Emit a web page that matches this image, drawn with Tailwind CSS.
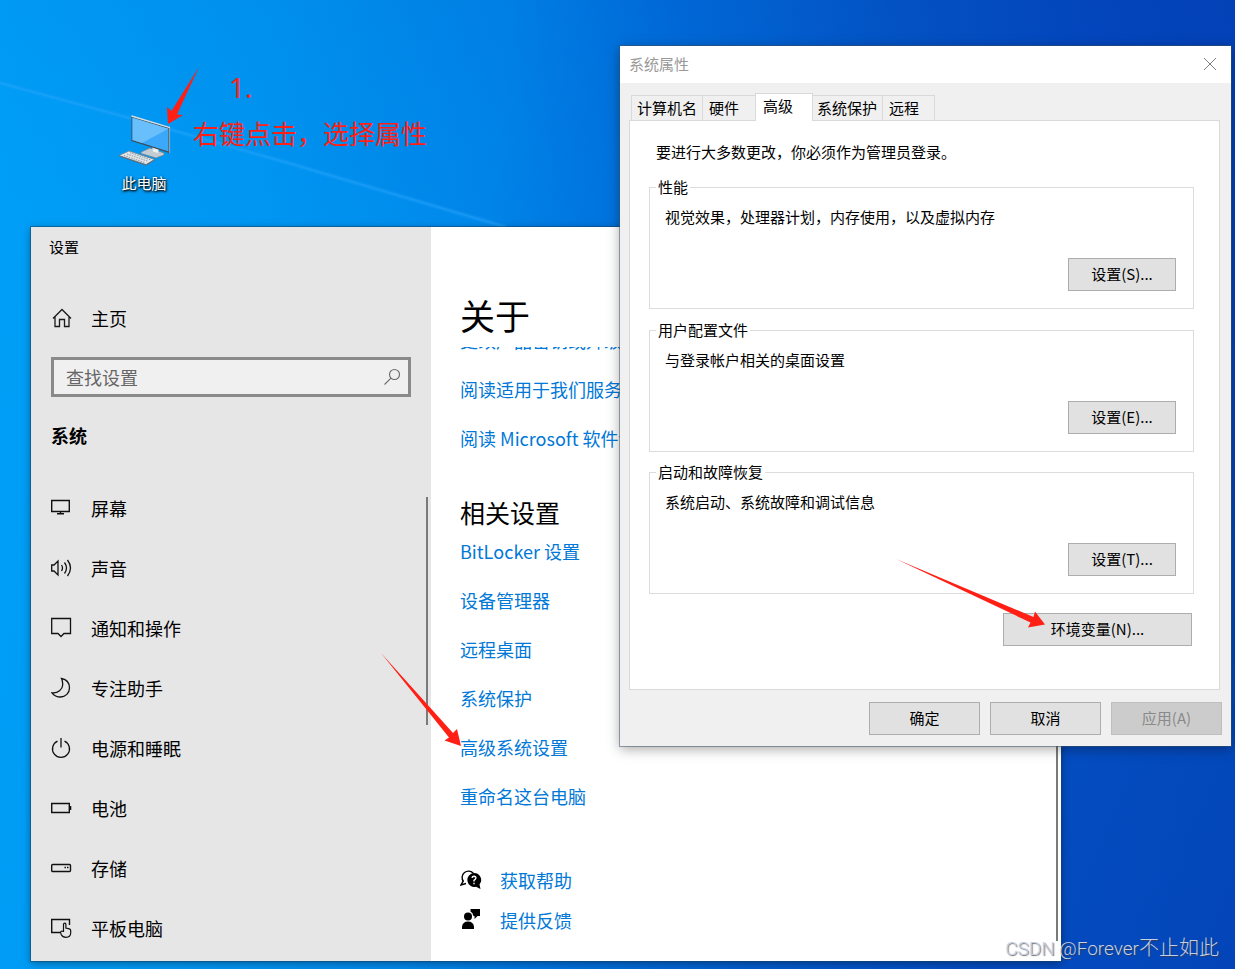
<!DOCTYPE html>
<html lang="zh-CN">
<head>
<meta charset="utf-8">
<meta name="viewport" content="width=device-width, initial-scale=1">
<title>系统属性</title>
<script src="https://cdn.jsdelivr.net/npm/@tailwindcss/browser@4"></script>
</head>
<body class="font-['Noto_Sans_CJK_SC',sans-serif] text-black">
<div class="relative h-screen min-h-[969px] overflow-hidden bg-[linear-gradient(97deg,#00a0f7_0%,#0098f2_20%,#0088ea_38%,#0070dc_50%,#0458c8_66%,#044ac0_80%,#0341b6_100%)]">

  <!-- wallpaper light -->
  <div class="absolute inset-0 bg-[linear-gradient(200deg,rgba(0,50,170,0.22)_0%,rgba(0,80,200,0.10)_28%,rgba(0,150,240,0.08)_48%,rgba(0,170,255,0)_100%)]"></div>
  <svg class="absolute left-0 top-0" width="620" height="240" viewBox="0 0 620 240" aria-hidden="true">
    <path d="M0 83 L126 117 L285 162 L506 227 L550 240 L0 240 Z" fill="#00a2ff" fill-opacity=".14"/>
    <path d="M0 83 L126 117 L285 162 L506 227" fill="none" stroke="#25a4ff" stroke-width="5" stroke-opacity=".22"/>
    <path d="M0 83 L126 117 L285 162 L506 227" fill="none" stroke="#35adff" stroke-width="2" stroke-opacity=".3"/>
  </svg>

  <!-- desktop shortcut -->
  <a href="#" class="absolute left-[112px] top-[114px] flex w-16 flex-col items-center gap-[5px]">
    <svg width="54" height="54" viewBox="0 0 54 54" aria-hidden="true">
      <path d="M24 38 L33 34 L47 39 L47 41 L39 44 L24 39.500 Z" fill="#c3ccd2" stroke="#6d7c86" stroke-width=".7"/>
      <path d="M35 32 L42 34 L41 39 L36 37.500Z" fill="#eef2f4"/>
      <path d="M14.500 2 L53 13.700 L53 39.200 L14.500 27 Z" fill="#3f4b54"/>
      <path d="M14.500 2 L53 13.700" stroke="#d8dfe3" stroke-width="1.400"/>
      <path d="M52.600 14 V39" stroke="#b4bfc6" stroke-width=".8"/>
      <path d="M15.500 3.800 L51.500 14.700 L51.500 37.500 L15.500 26 Z" fill="#3ba8fa"/>
      <path d="M15.500 3.800 L51.500 14.700 L25 29 L15.500 26 Z" fill="#68bffc"/>
      <path d="M2 41.500 L12 37 L37.500 45.500 L29 50.500 Z" fill="#e3e7ea" stroke="#76838c" stroke-width=".8"/>
      <path d="M2 42 L29 51.200 L37.500 46" fill="none" stroke="#5f6c75" stroke-width="1"/>
      <path d="M7 41.500 L28 48.700 M10 40 L31 47.300 M13 38.800 L34 46" stroke="#8f9aa2" stroke-width="1" stroke-dasharray="1.500 1"/>
    </svg>
    <span class="text-[15px] leading-5 text-white [text-shadow:1px_1px_2px_#000,0_1px_3px_rgba(0,0,0,0.8)]">此电脑</span>
  </a>

  <!-- note -->
  <div class="absolute left-[193px] top-[67px] text-[#ff1f14]">
    <p class="pl-9 font-['Noto_Sans',sans-serif] text-[28px] leading-10">1.</p>
    <p class="mt-[6px] text-[26px] leading-10">右键点击，选择属性</p>
  </div>

  <!-- settings window -->
  <section class="absolute bottom-2 left-[31px] right-[174px] top-[227px] flex bg-white shadow-[0_0_0_1px_rgba(20,70,110,0.55),0_2px_8px_rgba(0,0,0,0.4)]" aria-label="设置">
    <aside class="flex w-[400px] shrink-0 flex-col overflow-hidden bg-[#e6e6e6]">
      <h2 class="pl-[18px] text-[15px] leading-10">设置</h2>
      <button class="mt-[31px] flex h-10 shrink-0 items-center gap-[18px] pl-5 text-left text-[18px]">
        <svg width="22" height="22" viewBox="0 0 22 22" fill="none" stroke="#1a1a1a" stroke-width="1.300"><path d="M2 11.500 L11 2.500 L20 11.500 M4 10 V19.500 H8.500 V12.500 H13.500 V19.500 H18 V10"/></svg>
        主页
      </button>
      <label class="mx-5 mt-[19px] flex h-10 shrink-0 items-center border-3 border-[#8a8a8a] bg-[#f0f0f0] pl-3 pr-[7px]">
        <input type="text" placeholder="查找设置" aria-label="查找设置" class="min-w-0 flex-1 bg-transparent text-[18px] leading-6 outline-none placeholder:text-[#666]">
        <svg width="18" height="18" viewBox="0 0 18 18" fill="none" stroke="#6a6a6a" stroke-width="1.100"><circle cx="11.500" cy="6.500" r="5"/><path d="M8 10.200 L1.500 16.500"/></svg>
      </label>
      <h3 class="mt-[18px] shrink-0 pl-5 text-[18px] font-bold leading-10">系统</h3>
      <nav class="relative mt-[23px] flex flex-1 flex-col overflow-hidden text-[18px]">
        <a href="#" class="flex h-15 shrink-0 items-center gap-[18px] pl-5"><svg width="22" height="22" viewBox="0 0 22 22" fill="none" stroke="#111" stroke-width="1.400" class="shrink-0"><path d="M.7 3.500 H18.300 V14.500 H.7 Z M9.500 14.500 V16.800 M6 16.800 H13"/></svg>屏幕</a>
        <a href="#" class="flex h-15 shrink-0 items-center gap-[18px] pl-5"><svg width="22" height="22" viewBox="0 0 22 22" fill="none" stroke="#111" stroke-width="1.300" class="shrink-0"><path d="M.7 8 H3 L7 4 V18 L3 14 H.7 Z M10.500 8 Q12.500 11 10.500 14 M13.500 5.500 Q17.500 11 13.500 16.500 M16.500 3 Q22.500 11 16.500 19"/></svg>声音</a>
        <a href="#" class="flex h-15 shrink-0 items-center gap-[18px] pl-5"><svg width="22" height="22" viewBox="0 0 22 22" fill="none" stroke="#111" stroke-width="1.300" class="shrink-0"><path d="M.7 1.500 H19.500 V16.500 H13 L10 19.500 L7 16.500 H.7 Z"/></svg>通知和操作</a>
        <a href="#" class="flex h-15 shrink-0 items-center gap-[18px] pl-5"><svg width="22" height="22" viewBox="0 0 22 22" fill="none" stroke="#111" stroke-width="1.300" class="shrink-0"><path d="M10.500 1.500 C16 2.500 18.500 6.500 18.500 11 C18.500 16 14.500 20 9.500 20 C6 20 3 18.500 1 15.800 C7 16.500 11.500 12.500 11.700 8 C11.800 5.500 11.500 3.500 10.500 1.500 Z"/></svg>专注助手</a>
        <a href="#" class="flex h-15 shrink-0 items-center gap-[18px] pl-5"><svg width="22" height="22" viewBox="0 0 22 22" fill="none" stroke="#111" stroke-width="1.300" class="shrink-0"><path d="M10 1 V10.500 M6.500 4.200 A8.500 8.500 0 1 0 13.500 4.200"/></svg>电源和睡眠</a>
        <a href="#" class="flex h-15 shrink-0 items-center gap-[18px] pl-5"><svg width="22" height="22" viewBox="0 0 22 22" fill="none" stroke="#111" stroke-width="1.400" class="shrink-0"><path d="M.7 6.500 H18.300 V15.500 H.7 Z"/><path d="M19.500 9 V13" stroke-width="1.600"/></svg>电池</a>
        <a href="#" class="flex h-15 shrink-0 items-center gap-[18px] pl-5"><svg width="22" height="22" viewBox="0 0 22 22" fill="none" stroke="#111" stroke-width="1.400" class="shrink-0"><rect x=".7" y="7.500" width="18.800" height="7" rx="1"/><path d="M13.500 10.500 H15 M16 10.500 H17.500"/></svg>存储</a>
        <a href="#" class="flex h-15 shrink-0 items-center gap-[18px] pl-5"><svg width="22" height="22" viewBox="0 0 22 22" fill="none" stroke="#111" stroke-width="1.400" class="shrink-0"><path d="M9 15.500 H.7 V2.500 H18.500 V8"/><path stroke-width="1.200" d="M12.500 15 V7.500 Q12.500 6.200 13.700 6.200 Q14.900 6.200 14.900 7.500 V11 L18.300 11.800 Q19.700 12.200 19.700 13.500 V16 Q19.500 20.300 15 20.300 Q11.500 20.300 10.300 17.800 L9.500 15.500 Q9.500 13.500 12.500 14.500"/></svg>平板电脑</a>
        <span class="absolute right-[3px] top-[19px] h-[228px] w-[2px] bg-[#7a7a7a]"></span>
      </nav>
    </aside>
    <main class="relative flex min-w-0 flex-1 flex-col pl-[29px] pt-[67px]">
      <h1 class="shrink-0 text-[35px] leading-[42px]">关于</h1>
      <div class="mt-[11px] flex-1 overflow-hidden whitespace-nowrap text-[18px] text-[#0078d7]">
        <div class="-mt-[31px] flex flex-col items-start">
          <a href="#" class="leading-[49px]">更改产品密钥或升级</a>
          <a href="#" class="leading-[49px]">阅读适用于我们服务</a>
          <a href="#" class="leading-[49px]">阅读 Microsoft 软件许</a>
          <h2 class="mt-[35px] text-[25px] leading-[29px] text-black">相关设置</h2>
          <a href="#" class="leading-[49px]">BitLocker 设置</a>
          <a href="#" class="leading-[49px]">设备管理器</a>
          <a href="#" class="leading-[49px]">远程桌面</a>
          <a href="#" class="leading-[49px]">系统保护</a>
          <a href="#" class="leading-[49px]">高级系统设置</a>
          <a href="#" class="leading-[49px]">重命名这台电脑</a>
          <a href="#" class="mt-[39px] flex h-10 items-center gap-[18px]">
            <svg width="22" height="22" viewBox="0 0 22 22" aria-hidden="true"><path d="M3.500 12.500 A6.200 6.200 0 1 1 13.500 4.500" fill="none" stroke="#000" stroke-width="1.400"/><path d="M3.300 11.800 L1 16 L6 14.500" fill="none" stroke="#000" stroke-width="1.400"/><path d="M14 4 A7 7 0 0 1 19.500 15.500 L20.500 20 L16 17.800 A7 7 0 1 1 14 4 Z" fill="#000"/><path d="M12 9 Q12.200 7.200 14 7.200 Q16 7.300 15.900 9 Q15.800 10.200 14 11.300 V12.500 M14 13.800 V15.300" fill="none" stroke="#fff" stroke-width="1.400"/></svg>
            获取帮助</a>
          <a href="#" class="flex h-10 items-center gap-[18px]">
            <svg width="22" height="22" viewBox="0 0 22 22" aria-hidden="true"><path d="M10.500 0 H20 V7 H17.500 L14.500 10 V7 L13.200 6.800 A5 5 0 0 0 10.500 2.500 Z" fill="#000"/><circle cx="8" cy="7.500" r="4" fill="#000"/><path d="M2 20 V18 Q2.500 12.500 8 12.500 Q13.500 12.500 14 18 V20 Z" fill="#000"/></svg>
            提供反馈</a>
        </div>
      </div>
      <span class="absolute bottom-5 right-[3px] top-[120px] w-[2px] bg-[#7a7a7a]"></span>
    </main>
  </section>

  <!-- system properties dialog -->
  <section class="absolute right-1 top-[46px] flex w-[611px] flex-col bg-[#f0f0f0] text-[15px] leading-[22px] shadow-[0_0_0_1px_rgba(60,80,100,0.5),0_3px_12px_rgba(0,0,0,0.35)]" role="dialog" aria-label="系统属性">
    <header class="flex h-[37px] items-center justify-between bg-white pb-[2px] pl-[9px] pr-[14px] text-[#999]">
      <h2>系统属性</h2>
      <button aria-label="关闭"><svg width="14" height="14" viewBox="0 0 14 14" stroke="#808080" stroke-width="1"><path d="M1 1 L13 13 M13 1 L1 13"/></svg></button>
    </header>
    <div class="pl-[9px] pr-[11px] pt-[10px]">
      <div class="flex items-end pl-[2px]" role="tablist">
        <button role="tab" class="h-[25px] w-[71px] whitespace-nowrap border-l border-t border-[#d9d9d9] pl-[5px] text-left">计算机名</button>
        <button role="tab" class="h-[25px] w-[53px] border-l border-t border-[#d9d9d9] pl-[6px] text-left">硬件</button>
        <button role="tab" aria-selected="true" class="relative -mb-px h-[28px] w-[58px] border-x border-t border-[#d9d9d9] bg-white pb-1 pl-[7px] text-left">高级</button>
        <button role="tab" class="h-[25px] w-[69px] whitespace-nowrap border-t border-[#d9d9d9] pl-[4px] text-left">系统保护</button>
        <button role="tab" class="h-[25px] w-[53px] border-x border-t border-[#d9d9d9] pl-[6px] text-left">远程</button>
      </div>
      <div class="flex flex-col border border-[#d9d9d9] bg-white pb-[43px] pl-[19px] pr-[25px] pt-5">
        <p class="pl-[7px]">要进行大多数更改，你必须作为管理员登录。</p>
        <fieldset class="mt-[13px] border border-[#dcdcdc] pb-[17px] pl-[6px] pr-[17px]">
          <legend class="px-[2px]">性能</legend>
          <p class="pl-[9px] pt-2">视觉效果，处理器计划，内存使用，以及虚拟内存</p>
          <div class="mt-[30px] flex justify-end"><button class="h-[33px] w-[108px] border border-[#adadad] bg-[#e1e1e1] pb-[2px]">设置(S)...</button></div>
        </fieldset>
        <fieldset class="mt-[10px] border border-[#dcdcdc] pb-[17px] pl-[6px] pr-[17px]">
          <legend class="px-[2px]">用户配置文件</legend>
          <p class="pl-[9px] pt-2">与登录帐户相关的桌面设置</p>
          <div class="mt-[30px] flex justify-end"><button class="h-[33px] w-[108px] border border-[#adadad] bg-[#e1e1e1] pb-[2px]">设置(E)...</button></div>
        </fieldset>
        <fieldset class="mt-[9px] border border-[#dcdcdc] pb-[17px] pl-[6px] pr-[17px]">
          <legend class="px-[2px]">启动和故障恢复</legend>
          <p class="pl-[9px] pt-2">系统启动、系统故障和调试信息</p>
          <div class="mt-[30px] flex justify-end"><button class="h-[33px] w-[108px] border border-[#adadad] bg-[#e1e1e1] pb-[2px]">设置(T)...</button></div>
        </fieldset>
        <button class="mr-[2px] mt-[19px] h-[33px] w-[189px] self-end border border-[#adadad] bg-[#e1e1e1] pb-[2px]">环境变量(N)...</button>
      </div>
    </div>
    <footer class="flex justify-end gap-[10px] pb-[11px] pr-[9px] pt-3">
      <button class="h-[33px] w-[111px] border border-[#adadad] bg-[#e1e1e1] pb-[2px]">确定</button>
      <button class="h-[33px] w-[111px] border border-[#adadad] bg-[#e1e1e1] pb-[2px]">取消</button>
      <button disabled class="h-[33px] w-[111px] border border-[#bfbfbf] bg-[#cccccc] pb-[2px] text-[#8a8a8a]">应用(A)</button>
    </footer>
  </section>

  <!-- pointer arrows -->
  <svg class="pointer-events-none absolute left-0 top-0" width="1235" height="969" viewBox="0 0 1235 969" fill="#ff1f14" aria-hidden="true">
    <path d="M199 67 L177 114.500 L183 115 L168 124 L167 107 L171.500 111 Z"/>
    <path d="M381 653 L453 733 L457 729 L461 746 L444.500 740.500 L449 737.500 Z"/>
    <path d="M896 559 L1033.500 617 L1035 611.500 L1045 624.500 L1028 627.500 L1030.500 622.500 Z"/>
  </svg>

  <p class="absolute bottom-[5px] right-4 font-['Roboto','Noto_Sans_CJK_SC',sans-serif] text-[20px] leading-[30px] font-light text-[#c5cfe2] [text-shadow:1px_1px_1px_rgba(60,60,70,0.75)]"><span class="text-[19px]">CSDN @Forever</span>不止如此</p>
</div>
</body>
</html>
